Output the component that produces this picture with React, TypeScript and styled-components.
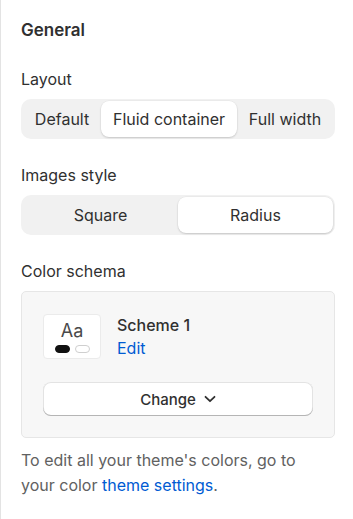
import React from "react";
import styled, { createGlobalStyle } from "styled-components";

const Global = createGlobalStyle`
  html, body { margin: 0; padding: 0; background: #ffffff; }
  body {
    font-family: Inter, "Noto Sans", "Liberation Sans", sans-serif;
    color: #303030;
    -webkit-font-smoothing: antialiased;
  }
  * { box-sizing: border-box; }
`;

const Panel = styled.div`
  width: 353px;
  min-height: 519px;
  border-left: 1px solid #e3e3e3;
  padding: 18px 18px 20px 20px;
  display: flex;
  flex-direction: column;
`;

const Heading = styled.h2`
  margin: 0;
  font-size: 17px;
  line-height: 24px;
  font-weight: 600;
  color: #303030;
`;

const Field = styled.section<{ $top: number }>`
  display: flex;
  flex-direction: column;
  gap: 10px;
  margin-top: ${(p) => p.$top}px;
`;

const Label = styled.div`
  font-size: 16px;
  line-height: 20px;
  font-weight: 400;
  color: #303030;
`;

const Segmented = styled.div`
  display: flex;
  height: 40px;
  padding: 2px;
  background: #f1f1f1;
  border-radius: 10px;
`;

const Segment = styled.button<{ $active?: boolean; $equal?: boolean }>`
  flex: ${(p) => (p.$equal ? "1 1 0" : "1 1 auto")};
  border: none;
  margin: 0;
  padding: 0 10px;
  height: 36px;
  border-radius: 8px;
  font-family: inherit;
  font-size: 16px;
  font-weight: 400;
  color: #303030;
  white-space: nowrap;
  cursor: pointer;
  background: ${(p) => (p.$active ? "#ffffff" : "transparent")};
  box-shadow: ${(p) =>
    p.$active ? "0 1px 2px rgba(0,0,0,0.16), 0 0 0 0.5px rgba(0,0,0,0.04)" : "none"};
`;

const Card = styled.div`
  background: #f7f7f7;
  border: 1px solid #e6e6e6;
  border-radius: 5px;
  padding: 22px 21px 21px 21px;
  display: flex;
  flex-direction: column;
  gap: 23px;
`;

const SchemeRow = styled.div`
  display: flex;
  align-items: flex-start;
  gap: 16px;
  height: 45px;
`;

const Swatch = styled.div`
  width: 58px;
  height: 45px;
  background: #ffffff;
  border: 1px solid #ebebeb;
  border-radius: 4px;
  display: flex;
  flex-direction: column;
  align-items: center;
  padding-top: 5px;
`;

const SwatchText = styled.span`
  font-size: 18px;
  line-height: 22px;
  font-weight: 400;
  color: #4a4a4a;
`;

const Pills = styled.div`
  display: flex;
  gap: 5px;
  margin-top: 3px;
`;

const Pill = styled.span<{ $dark?: boolean }>`
  width: 15px;
  height: 8px;
  border-radius: 4px;
  background: ${(p) => (p.$dark ? "#111111" : "#ffffff")};
  border: 1px solid ${(p) => (p.$dark ? "#111111" : "#cfcfcf")};
`;

const SchemeInfo = styled.div`
  display: flex;
  flex-direction: column;
  margin-top: -1px;
`;

const SchemeName = styled.span`
  font-size: 16px;
  line-height: 25px;
  font-weight: 500;
  color: #303030;
`;

const Link = styled.a`
  color: #005bd3;
  text-decoration: none;
  cursor: pointer;
`;

const EditLink = styled(Link)`
  font-size: 16px;
  line-height: 20px;
`;

const ChangeButton = styled.button`
  height: 34px;
  width: 100%;
  border: none;
  border-radius: 8px;
  background: #ffffff;
  font-family: inherit;
  font-size: 15px;
  font-weight: 550;
  color: #303030;
  display: flex;
  align-items: center;
  justify-content: center;
  gap: 8px;
  cursor: pointer;
  box-shadow: inset 0 -1px 0 #b5b5b5, inset 0 0 0 1px #e3e3e3;
`;

const Help = styled.p`
  margin: 10px 0 0 0;
  max-width: 300px;
  font-size: 16px;
  line-height: 25px;
  color: #616161;
`;

const Chevron = () => (
  <svg width="12" height="8" viewBox="0 0 12 8" fill="none">
    <path d="M1.5 1.8 6 6.2 10.5 1.8" stroke="#303030" strokeWidth="1.8" strokeLinecap="round" strokeLinejoin="round" />
  </svg>
);

export default function App() {
  return (
    <>
      <Global />
      <Panel>
        <Heading>General</Heading>
        <Field $top={27}>
          <Label>Layout</Label>
          <Segmented>
            <Segment>Default</Segment>
            <Segment $active>Fluid container</Segment>
            <Segment>Full width</Segment>
          </Segmented>
        </Field>
        <Field $top={26}>
          <Label>Images style</Label>
          <Segmented>
            <Segment $equal>Square</Segment>
            <Segment $equal $active>Radius</Segment>
          </Segmented>
        </Field>
        <Field $top={26}>
          <Label>Color schema</Label>
          <Card>
            <SchemeRow>
              <Swatch>
                <SwatchText>Aa</SwatchText>
                <Pills>
                  <Pill $dark />
                  <Pill />
                </Pills>
              </Swatch>
              <SchemeInfo>
                <SchemeName>Scheme 1</SchemeName>
                <EditLink>Edit</EditLink>
              </SchemeInfo>
            </SchemeRow>
            <ChangeButton>
              Change <Chevron />
            </ChangeButton>
          </Card>
        </Field>
        <Help>
          To edit all your theme's colors, go to your color <Link>theme settings</Link>.
        </Help>
      </Panel>
    </>
  );
}
